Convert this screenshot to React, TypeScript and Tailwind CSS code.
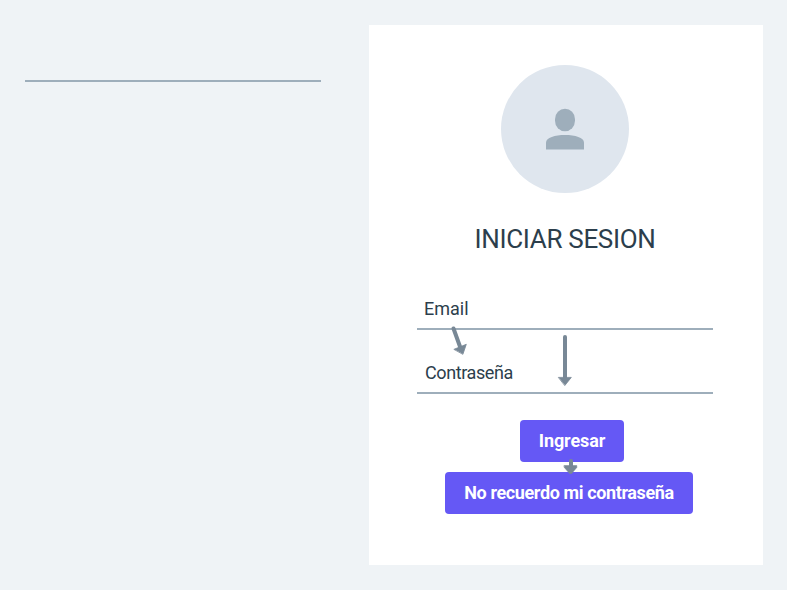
import React from "react";

function Avatar() {
  return (
    <div className="ml-[132px] flex h-32 w-32 shrink-0 items-center justify-center rounded-full bg-[#dfe6ee]">
      <svg width="38" height="42" viewBox="0 0 38 42" fill="#9eaebb">
        <rect x="9" y="0.8" width="20" height="22.4" rx="10" ry="10.4" />
        <path d="M0 41.5V34.5C0 29.5 9 27 19 27S38 29.5 38 34.5V41.5Z" />
      </svg>
    </div>
  );
}

function Field({ label, className }: { label: string; className: string }) {
  return (
    <div className="ml-12 flex h-10 w-[296px] shrink-0 items-center border-b-2 border-[#9eaebb]">
      <span className={className}>{label}</span>
    </div>
  );
}

function Arrows() {
  return (
    <svg
      className="pointer-events-none absolute left-0 top-0"
      width="394"
      height="540"
      viewBox="369 25 394 540"
      fill="#788896"
      stroke="#788896"
      strokeLinecap="round"
      strokeWidth="4"
    >
      <path d="M453.5 328.5L460.5 348" />
      <path d="M454.2 349.2L466.3 344.3L463 354Z" strokeWidth="0.8" />
      <path d="M565 337V378" />
      <path d="M558.7 377.4H571.3L565 385.3Z" strokeWidth="0.8" />
      <path d="M571 461V467" />
      <path d="M564.3 465.6H576.8V467.4L571.6 473.5H569.6L564.3 467.4Z" strokeWidth="0.6" />
    </svg>
  );
}

export default function App() {
  return (
    <main className="flex h-[590px] w-[787px] overflow-hidden bg-[#eff3f6] py-[25px] pl-[25px] font-['Roboto',sans-serif] text-[#2c3e4c]">
      <div className="mt-[55px] h-0.5 w-[296px] shrink-0 bg-[#9eaebb]" />
      <section className="relative ml-12 flex h-[540px] w-[393.5px] shrink-0 flex-col items-start bg-white pt-10">
        <Avatar />
        <h1 className="ml-[105.5px] mt-[31px] whitespace-nowrap text-[26px] leading-[30px] tracking-[-0.32px]">INICIAR SESION</h1>
        <div className="mt-9 flex flex-col gap-6">
          <Field label="Email" className="ml-[7px] text-[18px] leading-5" />
          <Field label="Contraseña" className="ml-2 text-[18px] leading-5 tracking-[-0.4px]" />
        </div>
        <button className="ml-[151px] mt-[26px] h-[42px] w-[104px] shrink-0 whitespace-nowrap rounded bg-[#6558f5] text-[18px] font-bold leading-5 tracking-[-0.12px] text-white">
          Ingresar
        </button>
        <button className="ml-[76px] mt-2.5 h-[42px] w-[248px] shrink-0 whitespace-nowrap rounded bg-[#6558f5] text-[18px] font-bold leading-5 tracking-[-0.38px] text-white">
          No recuerdo mi contraseña
        </button>
        <Arrows />
      </section>
    </main>
  );
}
